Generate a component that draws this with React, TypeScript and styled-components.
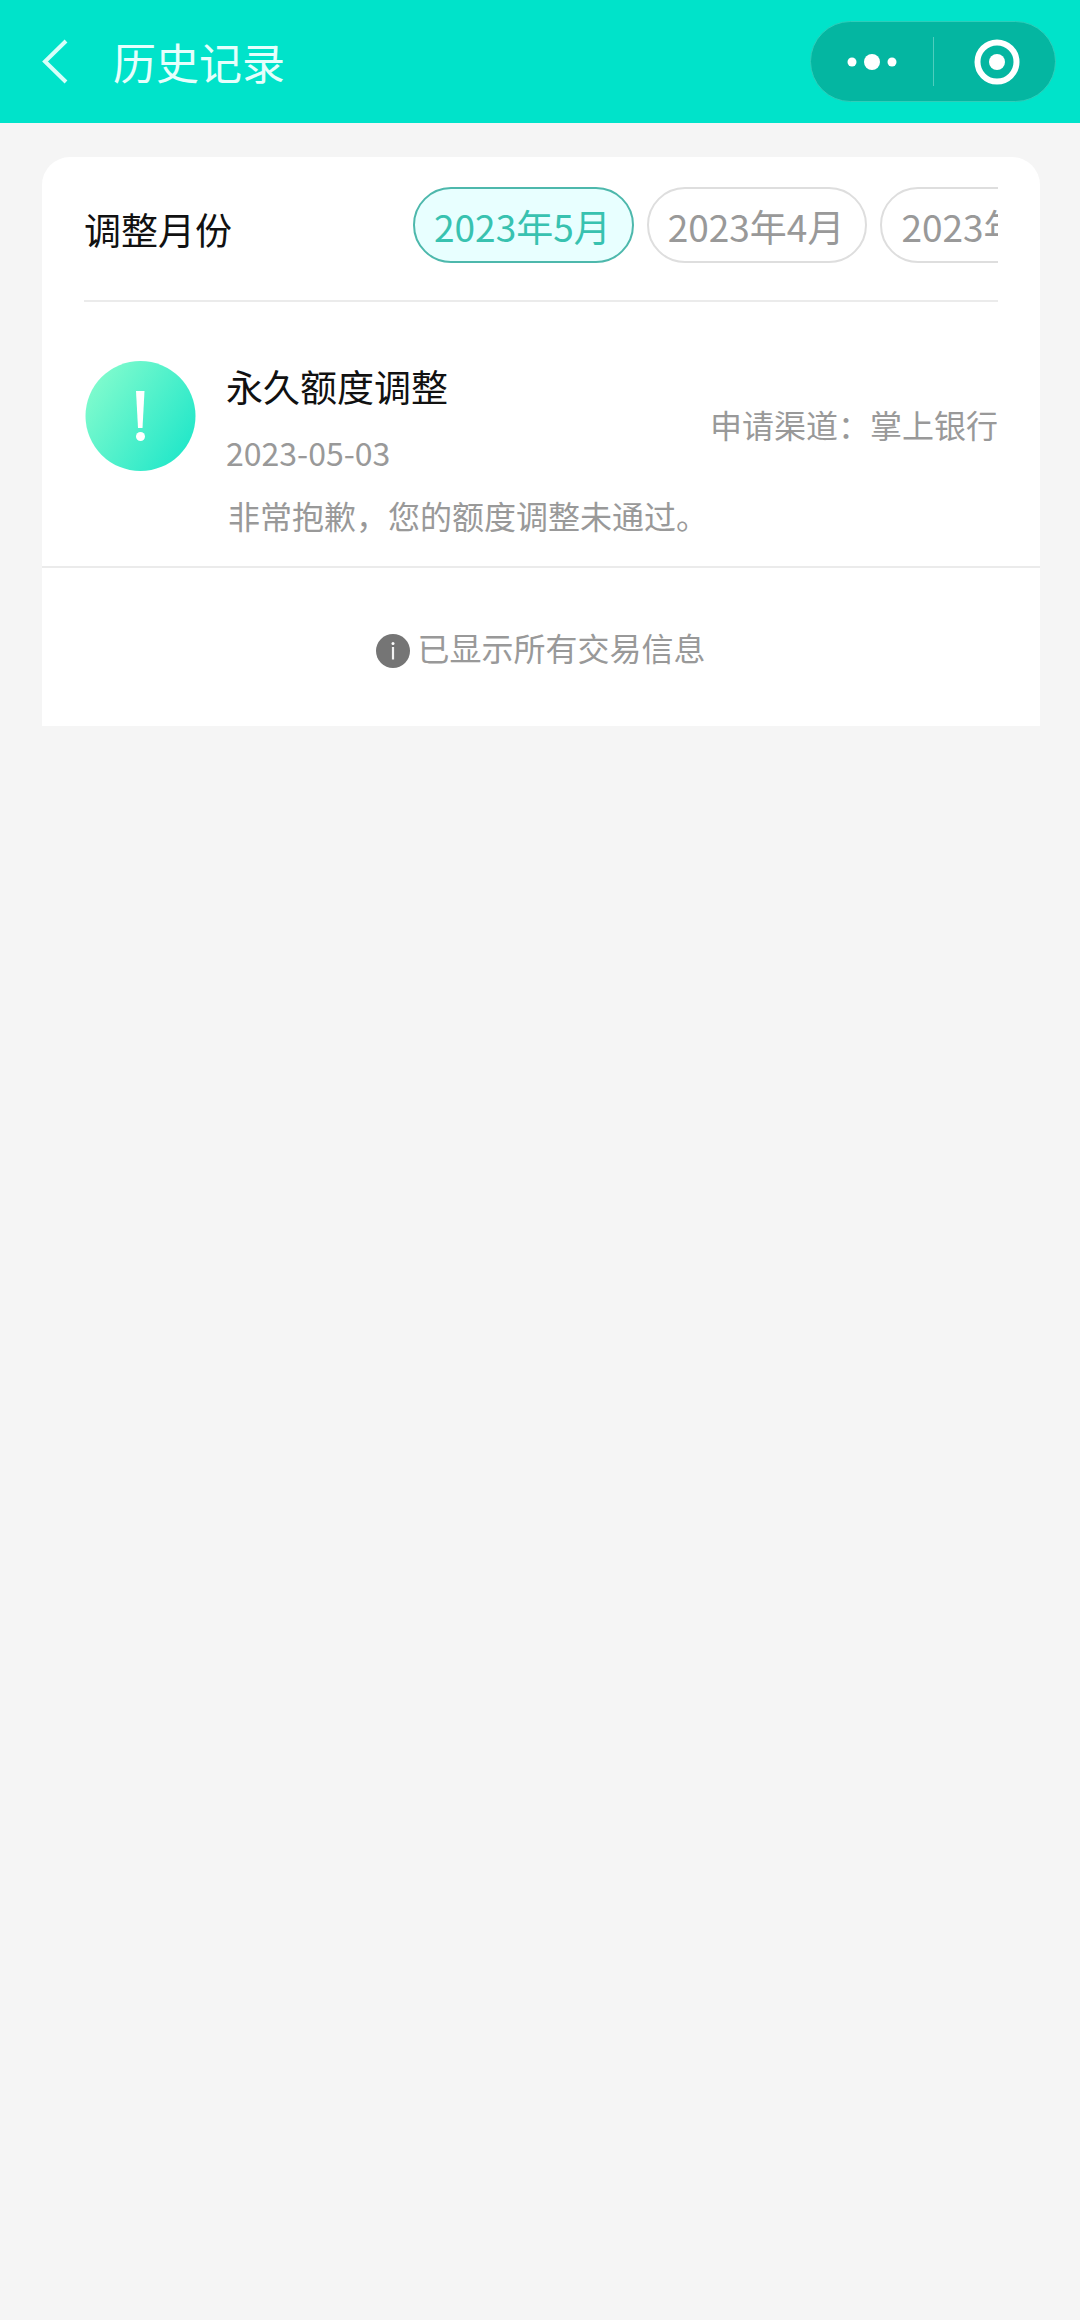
import React, { useState } from "react";
import styled, { createGlobalStyle } from "styled-components";

const GlobalStyle = createGlobalStyle`
  * { box-sizing: border-box; }
  body {
    margin: 0;
    background: #f5f5f5;
    color: #111;
    font-family: "Noto Sans CJK SC", "Noto Sans", sans-serif;
  }
  button { font: inherit; color: inherit; background: none; border: 0; padding: 0; cursor: pointer; }
  h1, h2, h3, p { margin: 0; font-weight: 400; }
`;

const Header = styled.header`
  display: flex;
  align-items: center;
  height: 123px;
  padding: 0 24px 0 32px;
  background: #00e3ca;
  color: #e6fffc;
`;

const BackButton = styled.button`
  display: flex;
  padding: 4px;
`;

const PageTitle = styled.h1`
  flex: 1;
  margin-left: 37px;
  padding-bottom: 2px;
  font-size: 43px;
  line-height: 64px;
`;

const Capsule = styled.div`
  display: flex;
  align-items: center;
  width: 246px;
  height: 81px;
  border: 1px solid #2fcdb9;
  border-radius: 41px;
  background: #04b6a1;
`;

const CapsuleButton = styled.button`
  flex: 1;
  display: flex;
  align-items: center;
  justify-content: center;
  height: 100%;
`;

const TargetIcon = styled.svg`
  width: 46px;
  height: 46px;
  margin-left: 6px;
`;

const CapsuleDivider = styled.span`
  width: 1px;
  height: 49px;
  background: #4fcdbd;
`;

const Card = styled.main`
  margin: 34px 40px 0 42px;
  border-radius: 28px 28px 0 0;
  background: #fff;
`;

const MonthBar = styled.section`
  display: flex;
  align-items: center;
  margin: 0 42px;
  padding: 30px 0 37px;
  border-bottom: 2px solid #ebebeb;
`;

const MonthLabel = styled.h2`
  flex: 0 0 36%;
  padding-top: 8px;
  font-size: 37px;
  line-height: 48px;
`;

const MonthList = styled.div`
  flex: 1;
  min-width: 0;
  display: flex;
  gap: 13px;
  overflow-x: auto;
  scrollbar-width: none;
`;

const MonthChip = styled.button<{ $active: boolean }>`
  && {
    flex: none;
    height: 76px;
    padding: 2px 21px 0 19px;
    border: 2px solid ${(p) => (p.$active ? "#4db8ac" : "#dedede")};
    border-radius: 38px;
    background: ${(p) => (p.$active ? "#e8ffff" : "#fff")};
    color: ${(p) => (p.$active ? "#38c2b0" : "#999")};
    font-size: 37px;
    line-height: 70px;
    white-space: nowrap;
  }
`;

const Record = styled.article`
  padding: 59px 42px 27px;
  border-bottom: 2px solid #ebebeb;
`;

const RecordHead = styled.div`
  display: flex;
  align-items: flex-start;
`;

const StatusIcon = styled.svg`
  flex: none;
  width: 112px;
  height: 112px;
`;

const RecordInfo = styled.div`
  flex: 1;
  display: flex;
  flex-direction: column;
  gap: 18px;
  margin-left: 30px;
  padding-top: 1px;
`;

const RecordTitle = styled.h3`
  font-size: 37px;
  line-height: 48px;
`;

const RecordDate = styled.time`
  color: #999;
  font-size: 32px;
  line-height: 48px;
`;

const Channel = styled.p`
  align-self: center;
  padding-top: 11px;
  color: #999;
  font-size: 32px;
  line-height: 48px;
`;

const Message = styled.p`
  margin-top: 15px;
  padding-left: 144px;
  color: #999;
  font-size: 32px;
  line-height: 48px;
`;

const Footer = styled.footer`
  display: flex;
  justify-content: center;
  gap: 7px;
  padding: 55px 0;
  color: #999;
  font-size: 32px;
  line-height: 48px;
`;

const InfoIcon = styled.svg`
  flex: none;
  width: 34px;
  height: 34px;
  margin-top: 11px;
`;

const months = ["2023年5月", "2023年4月", "2023年3月"];

export default function App() {
  const [month, setMonth] = useState(months[0]);

  return (
    <>
      <GlobalStyle />
      <Header>
        <BackButton aria-label="返回">
          <svg width="36" height="46" viewBox="0 0 36 46" fill="none" stroke="#d8fffa" strokeWidth="4">
            <path d="M30 2L9 22.500L30 43" />
          </svg>
        </BackButton>
        <PageTitle>历史记录</PageTitle>
        <Capsule>
          <CapsuleButton aria-label="更多">
            <svg width="50" height="18" viewBox="0 0 50 18" fill="#fff">
              <circle cx="5" cy="9" r="4.500" />
              <circle cx="25" cy="9" r="8" />
              <circle cx="45" cy="9" r="4.500" />
            </svg>
          </CapsuleButton>
          <CapsuleDivider />
          <CapsuleButton aria-label="关闭">
            <TargetIcon viewBox="0 0 46 46">
              <circle cx="23" cy="23" r="19.500" fill="none" stroke="#fff" strokeWidth="6" />
              <circle cx="23" cy="23" r="8" fill="#fff" />
            </TargetIcon>
          </CapsuleButton>
        </Capsule>
      </Header>

      <Card>
        <MonthBar>
          <MonthLabel id="month-label">调整月份</MonthLabel>
          <MonthList role="group" aria-labelledby="month-label">
            {months.map((m) => (
              <MonthChip key={m} $active={m === month} aria-pressed={m === month} onClick={() => setMonth(m)}>
                {m}
              </MonthChip>
            ))}
          </MonthList>
        </MonthBar>

        <Record>
          <RecordHead>
            <StatusIcon viewBox="0 0 112 112" aria-hidden="true">
              <defs>
                <linearGradient id="status-fill" x1="0.05" y1="0.2" x2="0.95" y2="0.8">
                  <stop offset="0" stopColor="#80fbcd" />
                  <stop offset="1" stopColor="#22e7c9" />
                </linearGradient>
              </defs>
              <circle cx="56.500" cy="55" r="55" fill="url(#status-fill)" />
              <path d="M52 30H60.500L58.500 67H54Z" fill="#fff" />
              <circle cx="56.500" cy="75.500" r="4.500" fill="#fff" />
            </StatusIcon>
            <RecordInfo>
              <RecordTitle>永久额度调整</RecordTitle>
              <RecordDate dateTime="2023-05-03">2023-05-03</RecordDate>
            </RecordInfo>
            <Channel>申请渠道：掌上银行</Channel>
          </RecordHead>
          <Message>非常抱歉，您的额度调整未通过。</Message>
        </Record>

        <Footer>
          <InfoIcon viewBox="0 0 34 34" aria-hidden="true">
            <circle cx="17" cy="17" r="17" fill="#757575" />
            <circle cx="17" cy="9.500" r="1.500" fill="#fff" />
            <path d="M17 13V25.500" stroke="#f2f2f2" strokeWidth="2.200" />
          </InfoIcon>
          <p>已显示所有交易信息</p>
        </Footer>
      </Card>
    </>
  );
}
